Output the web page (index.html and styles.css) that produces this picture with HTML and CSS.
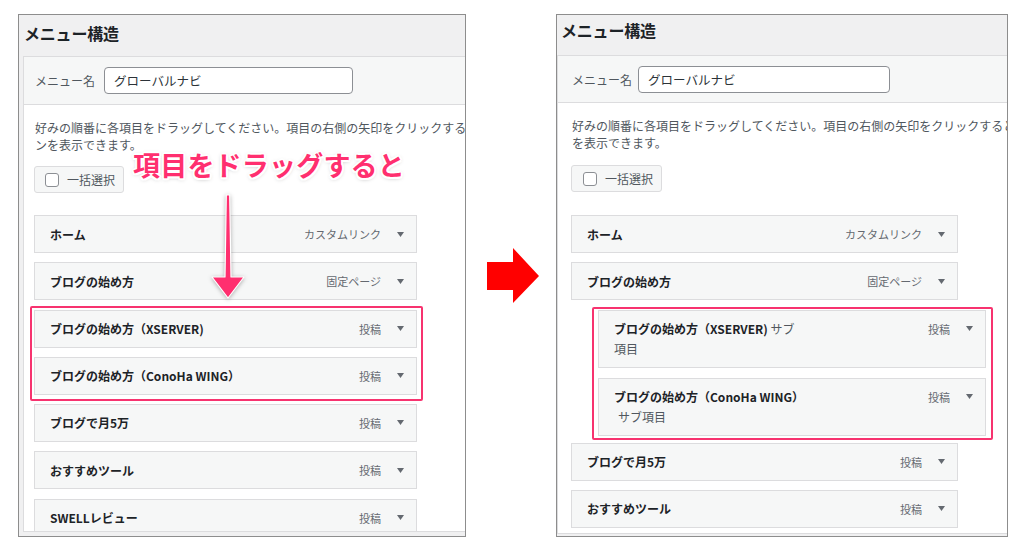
FILE: index.html
```html
<!DOCTYPE html>
<html lang="ja">
<head>
<meta charset="utf-8">
<title>メニュー構造</title>
<link rel="stylesheet" href="styles.css">
</head>
<body>
<div class="stage">
  <section class="panel panel--before">
    <h2 class="panel-title">メニュー構造</h2>
    <div class="editor">
      <div class="editor-head">
        <span class="name-label">メニュー名</span>
        <div class="name-input">グローバルナビ</div>
      </div>
      <div class="editor-body">
        <p class="desc">好みの順番に各項目をドラッグしてください。項目の右側の矢印をクリックすると、追加の設定オプショ<br>ンを表示できます。</p>
        <div class="bulk"><span class="check"></span>一括選択</div>
        <div class="items">
          <div class="item"><span class="item-title">ホーム</span><span class="item-meta">カスタムリンク<svg class="caret" viewBox="0 0 7 5"><path d="M0 0h7L3.5 5z"/></svg></span></div>
          <div class="item"><span class="item-title">ブログの始め方</span><span class="item-meta">固定ページ<svg class="caret" viewBox="0 0 7 5"><path d="M0 0h7L3.5 5z"/></svg></span></div>
          <div class="mark">
            <div class="item"><span class="item-title">ブログの始め方（XSERVER)</span><span class="item-meta">投稿<svg class="caret" viewBox="0 0 7 5"><path d="M0 0h7L3.5 5z"/></svg></span></div>
            <div class="item"><span class="item-title">ブログの始め方（ConoHa WING）</span><span class="item-meta">投稿<svg class="caret" viewBox="0 0 7 5"><path d="M0 0h7L3.5 5z"/></svg></span></div>
          </div>
          <div class="item"><span class="item-title">ブログで月5万</span><span class="item-meta">投稿<svg class="caret" viewBox="0 0 7 5"><path d="M0 0h7L3.5 5z"/></svg></span></div>
          <div class="item"><span class="item-title">おすすめツール</span><span class="item-meta">投稿<svg class="caret" viewBox="0 0 7 5"><path d="M0 0h7L3.5 5z"/></svg></span></div>
          <div class="item"><span class="item-title">SWELLレビュー</span><span class="item-meta">投稿<svg class="caret" viewBox="0 0 7 5"><path d="M0 0h7L3.5 5z"/></svg></span></div>
        </div>
      </div>
    </div>
    <div class="callout">項目をドラッグすると</div>
    <svg class="drag-arrow" viewBox="0 0 38 120" width="38" height="120">
      <path d="M17.3 2 L20.7 2 L22 84 L35 84 L19 105 L3 84 L16 84 Z"/>
    </svg>
  </section>

  <div class="between">
    <svg class="next-arrow" viewBox="0 0 52 55" width="52" height="55">
      <path d="M0 14 H26 V0 L52 28 L26 55 V42 H0 Z"/>
    </svg>
  </div>

  <section class="panel panel--after">
    <h2 class="panel-title">メニュー構造</h2>
    <div class="editor">
      <div class="editor-head">
        <span class="name-label">メニュー名</span>
        <div class="name-input">グローバルナビ</div>
      </div>
      <div class="editor-body">
        <p class="desc">好みの順番に各項目をドラッグしてください。項目の右側の矢印をクリックすると、追加の設定オプション<br>を表示できます。</p>
        <div class="bulk"><span class="check"></span>一括選択</div>
        <div class="items">
          <div class="item"><span class="item-title">ホーム</span><span class="item-meta">カスタムリンク<svg class="caret" viewBox="0 0 7 5"><path d="M0 0h7L3.5 5z"/></svg></span></div>
          <div class="item"><span class="item-title">ブログの始め方</span><span class="item-meta">固定ページ<svg class="caret" viewBox="0 0 7 5"><path d="M0 0h7L3.5 5z"/></svg></span></div>
          <div class="mark">
            <div class="item item--sub"><span class="item-title">ブログの始め方（XSERVER)<span class="sub-note"> サブ</span><br><span class="sub-note">項目</span></span><span class="item-meta">投稿<svg class="caret" viewBox="0 0 7 5"><path d="M0 0h7L3.5 5z"/></svg></span></div>
            <div class="item item--sub"><span class="item-title">ブログの始め方（ConoHa WING）<br><span class="sub-note sub-note--indent">サブ項目</span></span><span class="item-meta">投稿<svg class="caret" viewBox="0 0 7 5"><path d="M0 0h7L3.5 5z"/></svg></span></div>
          </div>
          <div class="item"><span class="item-title">ブログで月5万</span><span class="item-meta">投稿<svg class="caret" viewBox="0 0 7 5"><path d="M0 0h7L3.5 5z"/></svg></span></div>
          <div class="item"><span class="item-title">おすすめツール</span><span class="item-meta">投稿<svg class="caret" viewBox="0 0 7 5"><path d="M0 0h7L3.5 5z"/></svg></span></div>
        </div>
      </div>
    </div>
  </section>
</div>
</body>
</html>
```

FILE: styles.css
```css
* { box-sizing: border-box; }

html, body {
  margin: 0;
  padding: 0;
  background: #ffffff;
}

body {
  font-family: "Noto Sans CJK JP", "Noto Sans", "Liberation Sans", sans-serif;
  color: #1d2327;
  width: 1024px;
  height: 550px;
  overflow: hidden;
}

.stage {
  display: flex;
  align-items: flex-start;
  padding: 14px 0 0 18px;
}

/* ---------- panel ---------- */
.panel {
  position: relative;
  height: 523px;
  border: 1px solid #8d8d8d;
  background: #f0f0f1;
  overflow: hidden;
  display: flex;
  flex-direction: column;
}

.panel--before { width: 448px; }
.panel--after  { width: 452px; }

.panel-title {
  margin: 0;
  flex-shrink: 0;
  font-size: 16px;
  font-weight: 700;
  color: #1d2327;
  letter-spacing: -0.2px;
}

.panel--before .panel-title { height: 41px; line-height: 36px; padding-left: 5px; }
.panel--after  .panel-title { height: 40px; line-height: 30px; padding-left: 4px; }

.editor {
  flex: 1 1 auto;
  min-height: 0;
  width: 640px;
  border: 1px solid #dcdcde;
  border-right: none;
  background: #ffffff;
  overflow: hidden;
  display: flex;
  flex-direction: column;
}

.panel--before .editor { margin: 0 0 4px 4px; }
.panel--after  .editor { margin: 0 0 2px 0; }

.editor-head {
  flex-shrink: 0;
  display: flex;
  align-items: center;
  background: #f6f7f7;
  border-bottom: 1px solid #dcdcde;
}

.panel--before .editor-head { height: 48px; padding-left: 11px; }
.panel--after  .editor-head { height: 47px; padding-left: 14px; }

.name-label {
  font-size: 12px;
  color: #50575e;
  white-space: nowrap;
}

.panel--before .name-label { margin-right: 9px; }
.panel--after  .name-label { margin-right: 6px; }

.name-input {
  height: 27px;
  border: 1px solid #8c8f94;
  border-radius: 4px;
  background: #ffffff;
  padding-left: 9px;
  font-size: 12.5px;
  line-height: 25px;
  color: #2c3338;
}

.panel--before .name-input { width: 249px; }
.panel--after  .name-input { width: 252px; }

.editor-body { flex: 1 0 auto; }
.panel--before .editor-body { padding: 14px 10px 0 10px; }
.panel--after  .editor-body { padding: 13.5px 13px 0 13px; }

.desc {
  margin: 0;
  padding-left: 1px;
  font-size: 12px;
  line-height: 17px;
  color: #50575e;
  white-space: nowrap;
}

.bulk {
  display: flex;
  align-items: center;
  height: 27px;
  border: 1px solid #dcdcde;
  border-radius: 3px;
  background: #f6f7f7;
  font-size: 12px;
  color: #50575e;
}

.panel--before .bulk { width: 90px; margin-top: 13px; padding-left: 10px; }
.panel--after  .bulk { width: 91px; margin-top: 14.5px; padding-left: 11px; }

.check {
  width: 14px;
  height: 14px;
  border: 1px solid #8c8f94;
  border-radius: 3px;
  background: #ffffff;
  margin-right: 8px;
}

/* ---------- items ---------- */
.items {
  display: flex;
  flex-direction: column;
  gap: 9.33px;
}

.panel--before .items { width: 383px; margin-top: 22px; }
.panel--after  .items { width: 387px; margin-top: 23px; }

.item {
  display: flex;
  justify-content: space-between;
  align-items: center;
  height: 38px;
  padding: 0 12px 0 15px;
  border: 1px solid #dcdcde;
  background: #f6f7f7;
  flex-shrink: 0;
}

.item-title {
  font-size: 12px;
  font-weight: 700;
  color: #1d2327;
  white-space: nowrap;
}

.item-meta {
  display: flex;
  align-items: center;
  font-size: 11px;
  color: #646970;
  white-space: nowrap;
}

.caret {
  width: 7px;
  height: 5px;
  margin-left: 16px;
  fill: #646970;
}

.item--sub {
  height: auto;
  align-items: flex-start;
  padding: 8px 12px 8px 15px;
}

.item--sub .item-title { line-height: 20px; }
.item--sub .item-meta  { line-height: 20px; height: 20px; }

.sub-note {
  font-weight: 400;
  color: #50575e;
}

.sub-note--indent { padding-left: 4px; }

/* ---------- highlight annotation ---------- */
.mark {
  display: flex;
  flex-direction: column;
  border: 2px solid #f7336f;
  border-radius: 2px;
  flex-shrink: 0;
}

.panel--before .mark {
  gap: 9px;
  margin: -4px -6px -6px -4px;
  padding: 2px 4px 4px 2px;
}

.panel--after .mark {
  gap: 10px;
  width: 401px;
  margin: -3px 0 -6.33px 21px;
  padding: 1px 5px 2px 4px;
}

.callout {
  position: absolute;
  left: 114px;
  top: 135px;
  font-size: 27px;
  line-height: 30px;
  font-weight: 700;
  color: #ff2f6f;
  letter-spacing: 0.2px;
  white-space: nowrap;
  text-shadow:
    2px 0 0 #fff, -2px 0 0 #fff, 0 2px 0 #fff, 0 -2px 0 #fff,
    1.5px 1.5px 0 #fff, -1.5px 1.5px 0 #fff, 1.5px -1.5px 0 #fff, -1.5px -1.5px 0 #fff,
    0 1px 4px rgba(0, 0, 0, 0.35);
}

.drag-arrow {
  position: absolute;
  left: 190px;
  top: 178px;
  fill: #ff2f6f;
  stroke: #ffffff;
  stroke-width: 1.2;
  stroke-linejoin: round;
  filter: drop-shadow(0 1px 2px rgba(0, 0, 0, 0.3));
}

/* ---------- centre arrow ---------- */
.between {
  width: 90px;
  flex-shrink: 0;
  padding: 234px 0 0 21px;
}

.next-arrow {
  display: block;
  fill: #ff0000;
}
```
